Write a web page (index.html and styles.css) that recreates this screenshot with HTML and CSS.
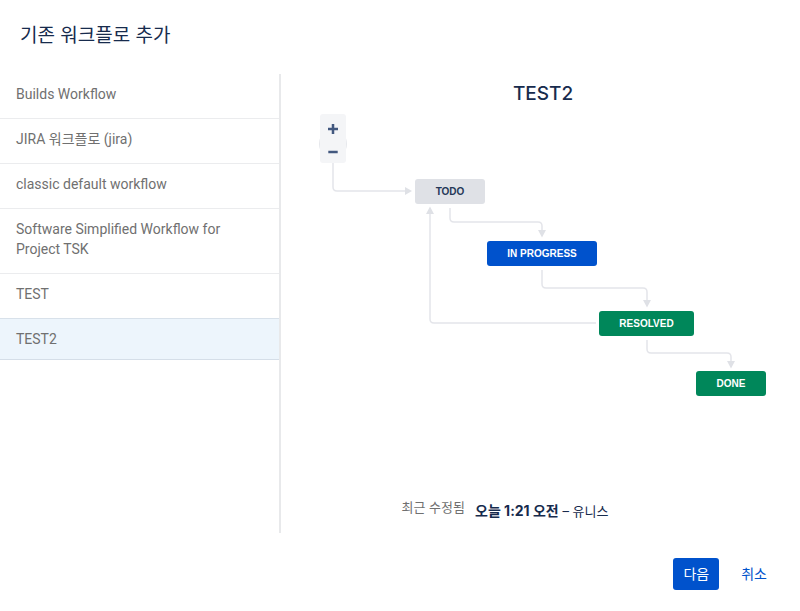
FILE: index.html
```html
<!DOCTYPE html>
<html lang="ko">
<head>
<meta charset="utf-8">
<title>기존 워크플로 추가</title>
<link rel="stylesheet" href="styles.css">
</head>
<body>
<main class="dialog">
  <h1 class="dialog-title">기존 워크플로 추가</h1>
  <div class="dialog-body">
    <ul class="workflow-list">
      <li><button type="button" class="workflow">Builds Workflow</button></li>
      <li><button type="button" class="workflow">JIRA 워크플로 (jira)</button></li>
      <li><button type="button" class="workflow">classic default workflow</button></li>
      <li><button type="button" class="workflow">Software Simplified Workflow for Project TSK</button></li>
      <li><button type="button" class="workflow before-selected">TEST</button></li>
      <li><button type="button" class="workflow selected" aria-current="true">TEST2</button></li>
    </ul>
    <section class="preview">
      <h2 class="preview-title">TEST2</h2>
      <div class="canvas">
        <svg class="links" viewBox="0 0 448 284" aria-hidden="true">
          <circle cx="13" cy="30" r="14" fill="#e6e8ec"/>
          <g fill="none" stroke="#e4e5ea" stroke-width="1.5">
            <path d="M13 44V73Q13 77 17 77H86"/>
            <path d="M130 94V104Q130 108 134 108H218Q222 108 222 112V118"/>
            <path d="M222 156V170Q222 174 226 174H323Q327 174 327 178V188"/>
            <path d="M327 226V235Q327 239 331 239H407Q411 239 411 243V248"/>
            <path d="M276 209H114Q110 209 110 205V99"/>
          </g>
          <g fill="#dfe1e6">
            <path d="M85 73L92 77L85 81Z"/>
            <path d="M218 116H226L222 123.500Z"/>
            <path d="M323 186H331L327 193.500Z"/>
            <path d="M407 247H415L411 254.500Z"/>
            <path d="M106 100H114L110 92.500Z"/>
          </g>
        </svg>
        <div class="zoom">
          <button type="button" class="zoom-button" aria-label="확대"><svg class="zoom-icon" viewBox="0 0 12 12"><path d="M1 6H11M6 1V11"/></svg></button>
          <button type="button" class="zoom-button" aria-label="축소"><svg class="zoom-icon" viewBox="0 0 12 12"><path d="M1.300 6H10.700"/></svg></button>
        </div>
        <div class="status todo">TODO</div>
        <div class="status progress">IN PROGRESS</div>
        <div class="status resolved">RESOLVED</div>
        <div class="status done">DONE</div>
      </div>
      <dl class="modified">
        <dt>최근 수정됨</dt>
        <dd><strong>오늘 1:21 오전</strong> – 유니스</dd>
      </dl>
    </section>
  </div>
  <footer class="actions">
    <button type="button" class="action primary">다음</button>
    <button type="button" class="action">취소</button>
  </footer>
</main>
</body>
</html>
```
FILE: styles.css
```css
* {
  box-sizing: border-box;
}

body {
  margin: 0;
  background: #fff;
  color: #172b4d;
  font: 14px/20px Inter, "Noto Sans CJK KR", sans-serif;
}

button {
  margin: 0;
  border: 0;
  background: none;
  font: inherit;
  cursor: pointer;
}

.dialog-title {
  margin: 0;
  padding: 20px 20px 26px;
  font-family: "Noto Sans CJK KR", sans-serif;
  font-size: 19px;
  font-weight: 400;
  line-height: 28px;
}

.dialog-body {
  display: grid;
  grid-template-columns: 35fr 65fr;
  min-height: 459px;
}

.workflow-list {
  margin: 0;
  padding: 0;
  list-style: none;
  font-family: Roboto, "Noto Sans CJK KR", sans-serif;
}

.workflow {
  display: block;
  width: 100%;
  padding: 10px 40px 14px 16px;
  border-bottom: 1px solid #ebecee;
  color: #707070;
  text-align: left;
}

.before-selected {
  border-color: #d8e1ea;
}

.selected {
  padding-bottom: 10px;
  border-color: #d5dee8;
  background: #edf5fc;
}

.preview {
  display: flex;
  flex-direction: column;
  margin-left: -1px;
  padding: 6px 34px 12px 39px;
  border-left: 2px solid #e8e9eb;
}

.preview-title {
  margin: 0 0 6px;
  font-size: 19px;
  font-weight: 500;
  line-height: 28px;
  text-align: center;
}

.canvas {
  position: relative;
  flex: 1;
}

.links {
  position: absolute;
  top: 0;
  left: 0;
  width: 448px;
  height: 284px;
  overflow: visible;
}

.zoom {
  position: absolute;
  top: 0;
  left: 0;
  display: grid;
  width: 26px;
  padding: 3px 0 0;
  border-radius: 3px;
  background: #f4f5f7;
}

.zoom-button {
  display: flex;
  align-items: center;
  justify-content: center;
  height: 23px;
  padding: 0;
}

.zoom-icon {
  width: 12px;
  height: 12px;
  fill: none;
  stroke: #42587f;
  stroke-width: 2.5;
}

.status {
  position: absolute;
  border-radius: 3px;
  color: #fff;
  font: bold 10px/25px "Liberation Sans", sans-serif;
  text-align: center;
}

.todo {
  top: 65px;
  left: 95px;
  width: 70px;
  background: #dfe1e6;
  color: #253858;
}

.progress {
  top: 127px;
  left: 167px;
  width: 110px;
  background: #0052cc;
}

.resolved {
  top: 197px;
  left: 279px;
  width: 95px;
  background: #00875a;
}

.done {
  top: 257px;
  left: 376px;
  width: 70px;
  background: #00875a;
}

.modified {
  display: flex;
  gap: 10px;
  margin: 0 76px 0 0;
  justify-content: center;
  font-size: 13px;
}

.modified dt {
  color: #707070;
}

.modified dd {
  margin: 0;
  padding-top: 4px;
}

.modified strong {
  font-size: 14px;
  font-weight: 700;
}

.actions {
  display: flex;
  justify-content: flex-end;
  gap: 12px;
  padding: 25px 23px 20px;
}

.action {
  padding: 6px 10px;
  border-radius: 3px;
  color: #0052cc;
}

.primary {
  background: #0052cc;
  color: #fff;
}
```
